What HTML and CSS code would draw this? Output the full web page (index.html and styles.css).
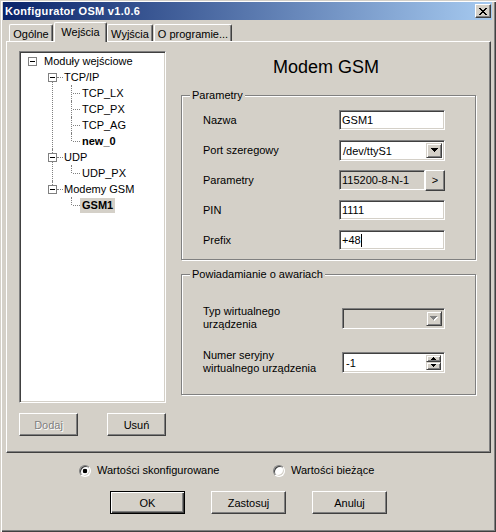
FILE: index.html
```html
<!DOCTYPE html>
<html lang="pl">
<head>
<meta charset="utf-8">
<title>Konfigurator OSM v1.0.6</title>
<link rel="stylesheet" href="styles.css">
</head>
<body>
<div class="window">
  <div class="titlebar">
    <span class="title">Konfigurator OSM v1.0.6</span>
    <span class="close"><svg width="8" height="7" viewBox="0 0 8 7" shape-rendering="crispEdges"><path d="M0 0h2v1H0zM6 0h2v1H6zM1 1h2v1H1zM5 1h2v1H5zM2 2h4v1H2zM3 3h2v1H3zM2 4h4v1H2zM1 5h2v1H1zM5 5h2v1H5zM0 6h2v1H0zM6 6h2v1H6z" fill="#000"/></svg></span>
  </div>
  <div class="main">
    <div class="tabs">
      <div class="tab t-ogolne">Ogólne</div>
      <div class="tab active t-wejscia">Wejścia</div>
      <div class="tab t-wyjscia">Wyjścia</div>
      <div class="tab t-oprog">O programie...</div>
    </div>
    <div class="panel">
      <div class="left">
        <div class="tree">
          <ul class="lvl0">
            <li>
              <div class="node"><span class="exp"></span><span class="lbl">Moduły wejściowe</span></div>
              <ul class="lvl1">
                <li>
                  <div class="node"><span class="exp"></span><span class="dash"></span><span class="lbl">TCP/IP</span></div>
                  <ul class="lvl2">
                    <li><div class="node"><span class="lbl">TCP_LX</span></div></li>
                    <li><div class="node"><span class="lbl">TCP_PX</span></div></li>
                    <li><div class="node"><span class="lbl">TCP_AG</span></div></li>
                    <li><div class="node"><span class="lbl bold">new_0</span></div></li>
                  </ul>
                </li>
                <li>
                  <div class="node"><span class="exp"></span><span class="dash"></span><span class="lbl">UDP</span></div>
                  <ul class="lvl2">
                    <li><div class="node"><span class="lbl">UDP_PX</span></div></li>
                  </ul>
                </li>
                <li>
                  <div class="node"><span class="exp"></span><span class="dash"></span><span class="lbl">Modemy GSM</span></div>
                  <ul class="lvl2">
                    <li><div class="node"><span class="lbl bold sel">GSM1</span></div></li>
                  </ul>
                </li>
              </ul>
            </li>
          </ul>
        </div>
        <div class="left-btns">
          <div class="btn small disabled">Dodaj</div>
          <div class="btn small">Usuń</div>
        </div>
      </div>
      <div class="right">
        <div class="heading">Modem GSM</div>
        <div class="group g1">
          <span class="legend">Parametry</span>
          <div class="fields">
            <span class="label">Nazwa</span>
            <div class="edit">GSM1</div>
            <span class="label">Port szeregowy</span>
            <div class="combo"><span class="combo-text">/dev/ttyS1</span><span class="drop"><svg width="7" height="4" viewBox="0 0 7 4" shape-rendering="crispEdges"><path d="M0 0h7v1H0zM1 1h5v1H1zM2 2h3v1H2zM3 3h1v1H3z" fill="#000"/></svg></span></div>
            <span class="label">Parametry</span>
            <div class="ro-row"><div class="ro">115200-8-N-1</div><div class="more">&gt;</div></div>
            <span class="label">PIN</span>
            <div class="edit">1111</div>
            <span class="label">Prefix</span>
            <div class="edit">+48<span class="caret"></span></div>
          </div>
        </div>
        <div class="group g2">
          <span class="legend">Powiadamianie o awariach</span>
          <div class="fields">
            <span class="label two">Typ wirtualnego<br>urządzenia</span>
            <div class="combo disabled"><span class="combo-text"></span><span class="drop"><svg width="8" height="5" viewBox="0 0 8 5" shape-rendering="crispEdges"><path d="M1 1h7v1H1zM2 2h5v1H2zM3 3h3v1H3zM4 4h1v1H4z" fill="#fff"/><path d="M0 0h7v1H0zM1 1h5v1H1zM2 2h3v1H2zM3 3h1v1H3z" fill="#808080"/></svg></span></div>
            <span class="label two">Numer seryjny<br>wirtualnego urządzenia</span>
            <div class="spin"><span class="combo-text">-1</span><span class="spinbtns"><span class="sb up"><svg width="5" height="3" viewBox="0 0 5 3" shape-rendering="crispEdges"><path d="M2 0h1v1H2zM1 1h3v1H1zM0 2h5v1H0z" fill="#000"/></svg></span><span class="sb down"><svg width="5" height="3" viewBox="0 0 5 3" shape-rendering="crispEdges"><path d="M0 0h5v1H0zM1 1h3v1H1zM2 2h1v1H2z" fill="#000"/></svg></span></span></div>
          </div>
        </div>
      </div>
    </div>
    <div class="radios">
      <label class="radio-item first"><span class="radio on"></span>Wartości skonfigurowane</label>
      <label class="radio-item"><span class="radio"></span>Wartości bieżące</label>
    </div>
    <div class="actions">
      <div class="btn wide default">OK</div>
      <div class="btn wide">Zastosuj</div>
      <div class="btn wide">Anuluj</div>
    </div>
  </div>
</div>
</body>
</html>
```

FILE: styles.css
```css
html, body {
  margin: 0;
  padding: 0;
  background: #d4d0c8;
}
body {
  font: 11px "Liberation Sans", Arial, sans-serif;
  color: #000;
}
.window {
  width: 496px;
  height: 532px;
  box-sizing: border-box;
  padding: 2px 4px 0 3px;
  background: #d4d0c8;
  box-shadow: inset 1px 1px 0 #d4d0c8, inset 2px 2px 0 #fff, inset -1px -1px 0 #404040, inset -2px -2px 0 #808080;
  display: flex;
  flex-direction: column;
}
.titlebar {
  height: 18px;
  flex: none;
  display: flex;
  align-items: center;
  justify-content: space-between;
  padding: 0 1px 0 2px;
  background: linear-gradient(to right, #0a246a, #a6caf0);
  color: #fff;
}
.title {
  font-weight: bold;
  font-size: 11px;
  letter-spacing: 0.3px;
}
.close {
  width: 16px;
  height: 14px;
  box-sizing: border-box;
  background: #d4d0c8;
  border: 1px solid;
  border-color: #fff #404040 #404040 #fff;
  box-shadow: inset -1px -1px 0 #808080;
  display: flex;
  align-items: center;
  justify-content: center;
}
.close svg { display: block; }
.main {
  margin: 0 1px 0 3px;
  display: flex;
  flex-direction: column;
}
.tabs {
  height: 21px;
  display: flex;
  align-items: flex-end;
  padding-left: 3px;
}
.tab {
  height: 17px;
  box-sizing: border-box;
  border: 1px solid;
  border-bottom: 0;
  border-color: #fff #404040 #404040 #fff;
  box-shadow: inset -1px 0 0 #808080;
  border-radius: 2px 2px 0 0;
  display: flex;
  justify-content: center;
  align-items: flex-start;
  padding-top: 3px;
  line-height: 13px;
  margin-right: 1px;
  background: #d4d0c8;
}
.tab.active {
  height: 20px;
  margin-bottom: -1px;
  position: relative;
  z-index: 1;
  margin-right: 0;
  padding-top: 3px;
}
.t-ogolne { width: 44px; }
.t-wejscia { width: 53px; }
.t-wyjscia { width: 46px; }
.t-oprog { width: 78px; }
.panel {
  height: 412px;
  box-sizing: border-box;
  border: 1px solid;
  border-color: #fff #404040 #404040 #fff;
  box-shadow: inset -1px -1px 0 #808080;
  padding: 9px 0 0 12px;
  display: flex;
  gap: 15px;
}
.left {
  width: 147px;
  display: flex;
  flex-direction: column;
}
.tree {
  height: 352px;
  box-sizing: border-box;
  border: 1px solid;
  border-color: #808080 #fff #fff #808080;
  box-shadow: inset 1px 1px 0 #404040, inset -1px -1px 0 #d4d0c8;
  background: #fff;
  padding: 1px;
}
.tree ul {
  list-style: none;
  margin: 0;
  padding: 0;
}
.tree li {
  position: relative;
}
.node {
  height: 16px;
  display: flex;
  align-items: center;
  position: relative;
  z-index: 1;
}
.lbl {
  line-height: 15px;
  white-space: nowrap;
}
.bold { font-weight: bold; }
.lvl0 > li > .node { padding-left: 7px; }
.exp {
  flex: none;
  width: 9px;
  height: 9px;
  box-sizing: border-box;
  border: 1px solid #808080;
  background: linear-gradient(#000, #000) center / 5px 1px no-repeat, #fff;
}
.lvl0 > li > .node > .exp { margin-right: 7px; }
.lvl1 > li > .node { padding-left: 27px; }
.dash {
  width: 6px;
  height: 0;
  border-top: 1px dotted #808080;
  margin-right: 1px;
}
.lvl1 > li::before {
  content: "";
  position: absolute;
  left: 31px;
  top: 0;
  bottom: 0;
  border-left: 1px dotted #808080;
}
.lvl1 > li:first-child::before { top: 8px; }
.lvl1 > li:last-child::before { bottom: auto; height: 8px; }
.lvl2 > li > .node { padding-left: 59px; }
.lvl2 .lbl { padding: 0 2px; }
.lvl2 > li::before {
  content: "";
  position: absolute;
  left: 50px;
  top: 0;
  bottom: 0;
  border-left: 1px dotted #808080;
}
.lvl2 > li:last-child::before { bottom: auto; height: 8px; }
.lvl2 > li::after {
  content: "";
  position: absolute;
  left: 52px;
  top: 8px;
  width: 7px;
  border-top: 1px dotted #808080;
}
.sel {
  background: #d4d0c8;
}
.left-btns {
  margin-top: 10px;
  display: flex;
  justify-content: space-between;
}
.btn {
  height: 23px;
  box-sizing: border-box;
  border: 1px solid;
  border-color: #fff #404040 #404040 #fff;
  box-shadow: inset -1px -1px 0 #808080;
  background: #d4d0c8;
  display: flex;
  align-items: center;
  justify-content: center;
}
.btn.small { width: 59px; }
.btn.wide { width: 75px; }
.btn.disabled {
  color: #808080;
  text-shadow: 1px 1px 0 #fff;
}
.btn.default {
  border-color: #000;
  box-shadow: inset 1px 1px 0 #fff, inset -1px -1px 0 #404040, inset -2px -2px 0 #808080;
}
.right {
  width: 296px;
  display: flex;
  flex-direction: column;
}
.heading {
  font-size: 18px;
  line-height: 22px;
  margin-top: 5px;
  text-align: center;
  padding-right: 6px;
}
.group {
  position: relative;
  width: 295px;
  box-sizing: border-box;
  border: 1px solid #808080;
  box-shadow: inset 1px 1px 0 #fff, 1px 1px 0 #fff;
}
.g1 { margin-top: 17px; }
.g2 { margin-top: 14px; }
.legend {
  position: absolute;
  left: 8px;
  top: -7px;
  padding: 0 2px;
  background: #d4d0c8;
  line-height: 13px;
}
.fields {
  display: grid;
  align-items: center;
}
.g1 .fields {
  grid-template-columns: 136px 106px;
  grid-auto-rows: 30px;
  padding: 9px 0 4px 21px;
}
.g2 .fields {
  grid-template-columns: 139px 103px;
  grid-auto-rows: 26px;
  row-gap: 18px;
  padding: 30px 0 19px 21px;
}
.label { line-height: 13px; }
.edit, .combo, .ro, .spin {
  box-sizing: border-box;
  border: 1px solid;
  border-color: #808080 #fff #fff #808080;
  box-shadow: inset 1px 1px 0 #404040, inset -1px -1px 0 #d4d0c8;
  background: #fff;
}
.edit {
  height: 20px;
  padding: 1px 1px 0 2px;
  line-height: 17px;
  display: flex;
  align-items: center;
}
.caret {
  display: inline-block;
  width: 1px;
  height: 13px;
  background: #000;
}
.combo, .spin {
  height: 21px;
  display: flex;
  align-items: stretch;
  padding: 2px;
}
.combo-text {
  flex: 1;
  line-height: 17px;
  padding-left: 1px;
}
.drop, .sb {
  box-sizing: border-box;
  border: 1px solid;
  border-color: #d4d0c8 #404040 #404040 #d4d0c8;
  box-shadow: inset 1px 1px 0 #fff, inset -1px -1px 0 #808080;
  background: #d4d0c8;
  display: flex;
  align-items: center;
  justify-content: center;
}
.drop { width: 16px; }
.drop svg, .sb svg { display: block; }
.combo.disabled { background: #d4d0c8; }
.spinbtns {
  display: flex;
  flex-direction: column;
  width: 15px;
  margin-right: 1px;
}
.sb.up { height: 8px; }
.sb.down { height: 9px; }
.ro-row {
  display: flex;
  align-items: flex-start;
}
.ro {
  width: 86px;
  height: 20px;
  background: #d4d0c8;
  padding: 1px 0 0 2px;
  line-height: 17px;
}
.more {
  width: 20px;
  height: 21px;
  box-sizing: border-box;
  border: 1px solid;
  border-color: #fff #404040 #404040 #fff;
  box-shadow: inset -1px -1px 0 #808080;
  display: flex;
  align-items: center;
  justify-content: center;
}
.radios {
  margin-top: 11px;
  height: 13px;
  display: flex;
  align-items: center;
  padding-left: 73px;
}
.radio-item {
  display: flex;
  align-items: center;
  line-height: 13px;
}
.radio-item.first { width: 194px; }
.radio {
  width: 12px;
  height: 12px;
  box-sizing: border-box;
  border-radius: 50%;
  border: 1px solid;
  border-color: #808080 #fff #fff #808080;
  box-shadow: inset 1px 1px 0 #404040, inset -1px -1px 0 #d4d0c8;
  background: #fff;
  margin-right: 6px;
}
.radio.on {
  background: radial-gradient(circle, #000 0 2px, #fff 2.6px);
}
.actions {
  margin-top: 14px;
  display: flex;
  gap: 26px;
  padding-left: 104px;
}
```
